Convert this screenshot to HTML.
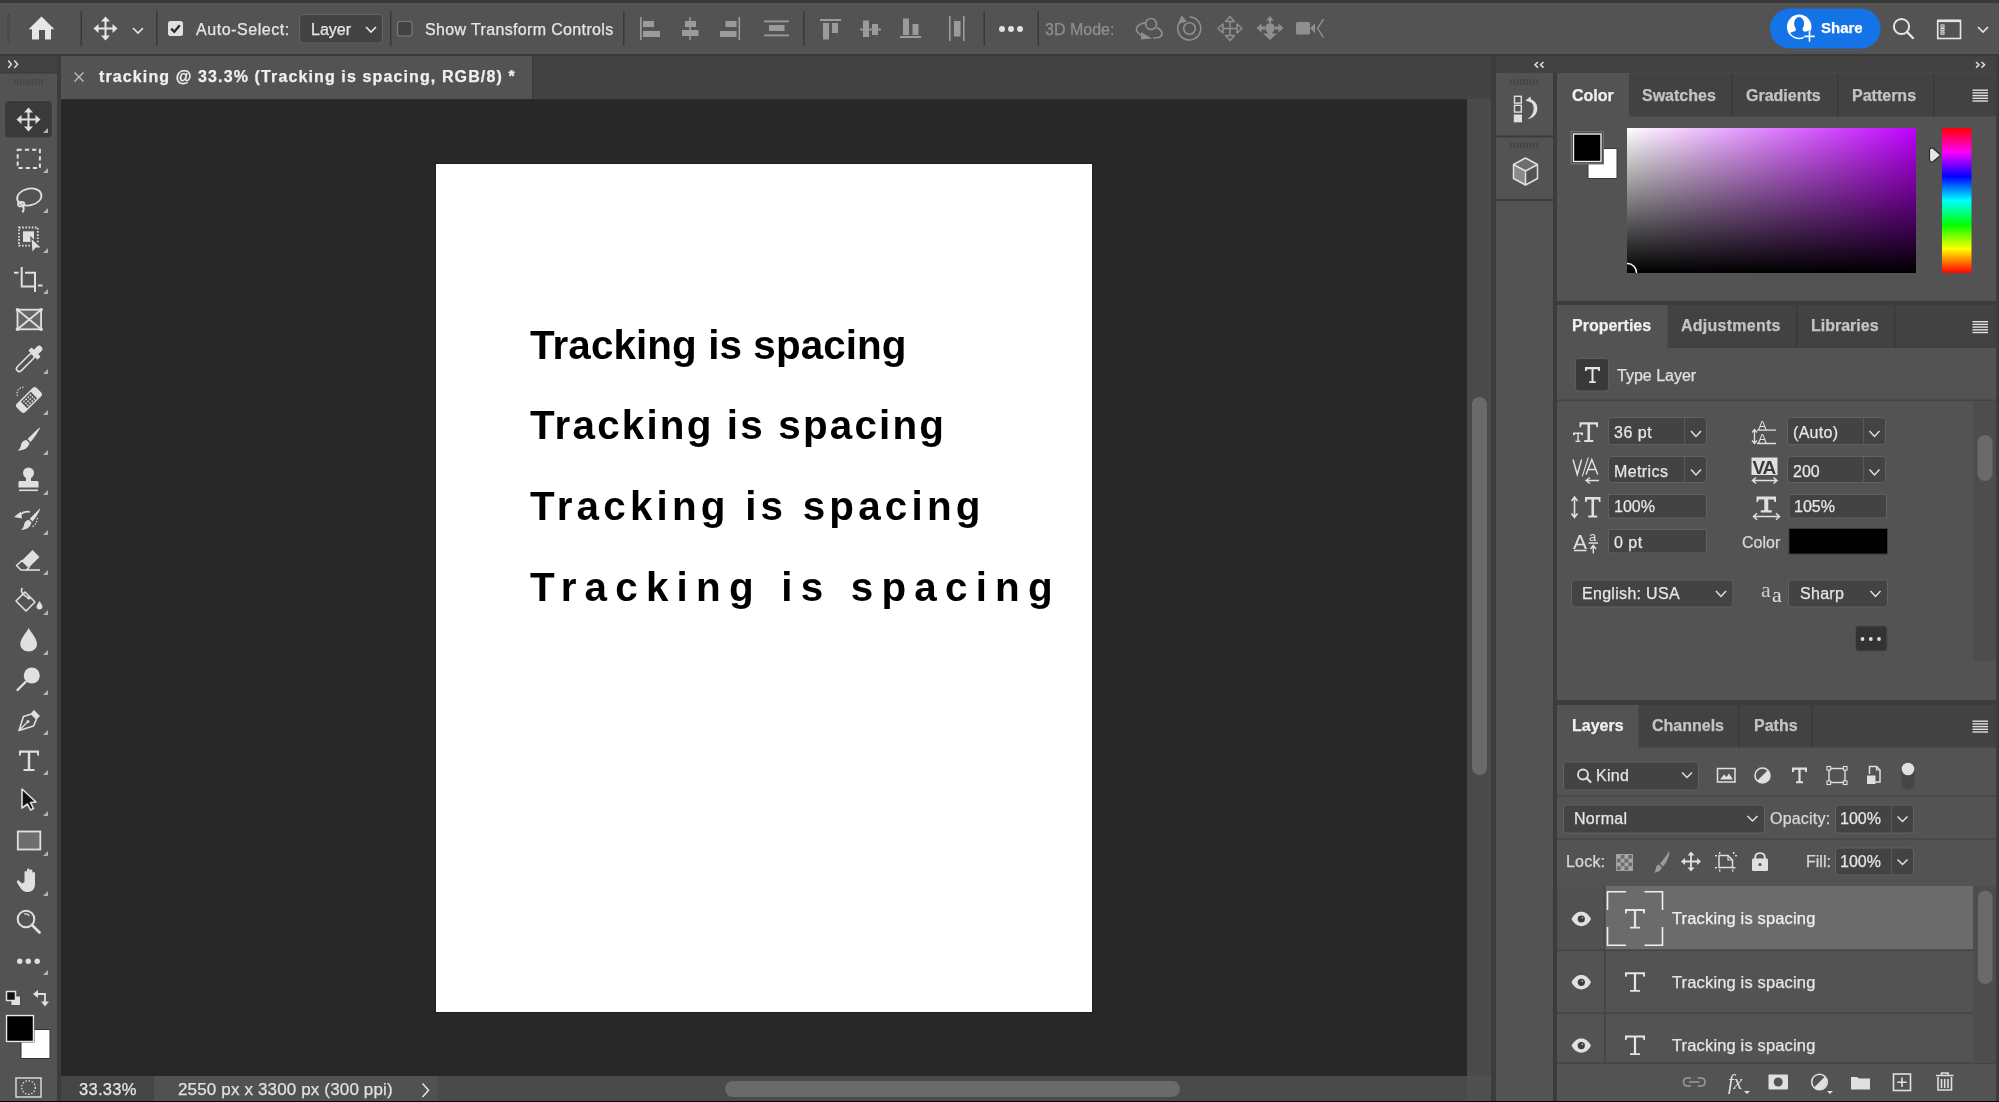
<!DOCTYPE html>
<html><head><meta charset="utf-8">
<style>
*{margin:0;padding:0;box-sizing:border-box}
html,body{width:1999px;height:1102px;overflow:hidden;background:#535353;font-family:"Liberation Sans",sans-serif;color:#e6e6e6}
.a{position:absolute}
.r{position:absolute;white-space:pre;line-height:1;will-change:transform;-webkit-text-stroke:0.25px currentColor}
svg{position:absolute;overflow:visible}
</style></head><body>
<!-- top border -->
<div class="a" style="left:0;top:0;width:1999px;height:2.5px;background:#393939"></div>
<!-- options bar -->
<div class="a" id="opt" style="left:0;top:3px;width:1999px;height:51px;background:#535353"></div>
<div class="a" style="left:0;top:54px;width:1999px;height:2px;background:#3a3a3a"></div>


<!-- OPTIONS BAR CONTENT -->
<svg style="left:0;top:0" width="1999" height="56">
 <g fill="#474747"><rect x="7" y="14" width="3" height="2"/><rect x="7" y="17" width="3" height="2"/><rect x="7" y="20" width="3" height="2"/><rect x="7" y="23" width="3" height="2"/><rect x="7" y="26" width="3" height="2"/><rect x="7" y="29" width="3" height="2"/><rect x="7" y="32" width="3" height="2"/><rect x="7" y="35" width="3" height="2"/><rect x="7" y="38" width="3" height="2"/><rect x="7" y="41" width="3" height="2"/></g>
 <path d="M41.5 16.5 L54.3 29.3 L51 29.3 L51 39.5 L45 39.5 L45 30 L39 30 L39 39.5 L32 39.5 L32 29.3 L28.7 29.3 Z" fill="#e6e6e6"/>
 <g fill="#3a3a3a"><rect x="80.5" y="11" width="1.5" height="35"/><rect x="156" y="11" width="1.5" height="35"/><rect x="390" y="11" width="1.5" height="35"/><rect x="623" y="11" width="1.5" height="35"/><rect x="803" y="11" width="1.5" height="35"/><rect x="983.5" y="11" width="1.5" height="35"/><rect x="1037.5" y="11" width="1.5" height="35"/></g>
 <!-- move icon -->
 <g stroke="#e6e6e6" stroke-width="2" fill="none"><path d="M105.5 20 V37 M97 28.5 H114"/></g>
 <g fill="#e6e6e6"><path d="M105.5 16.5 L110 21.5 H101 Z"/><path d="M105.5 40.5 L110 35.5 H101 Z"/><path d="M93.5 28.5 L98.5 24 V33 Z"/><path d="M117.5 28.5 L112.5 24 V33 Z"/></g>
 <path d="M133 28 L138 33 L143 28" stroke="#e6e6e6" stroke-width="1.6" fill="none"/>
 <!-- checkbox checked -->
 <rect x="168" y="21" width="15" height="15" rx="2.5" fill="#e0e0e0"/>
 <path d="M171.2 28.6 L174.3 31.8 L179.8 25.2" stroke="#2a2a2a" stroke-width="2.4" fill="none"/>
 <!-- layer dropdown -->
 <rect x="299.5" y="14.5" width="83" height="28.5" rx="3.5" fill="#434343" stroke="#626262" stroke-width="1.2"/>
 <path d="M366 27 L371 32 L376 27" stroke="#e6e6e6" stroke-width="1.6" fill="none"/>
 <!-- checkbox unchecked -->
 <rect x="397.5" y="21.5" width="14.5" height="14.5" rx="2.5" fill="#434343" stroke="#7a7a7a" stroke-width="1.2"/>
 <!-- align icons (disabled) -->
 <g fill="#9b9b9b">
  <rect x="640" y="17" width="1.6" height="23"/><rect x="643" y="21" width="11" height="6"/><rect x="643" y="31" width="17" height="6"/>
  <rect x="689.3" y="17" width="1.6" height="23"/><rect x="685" y="21" width="11" height="6"/><rect x="682" y="30" width="16.5" height="6"/>
  <rect x="738.5" y="17" width="1.6" height="23"/><rect x="725.5" y="21" width="11" height="6"/><rect x="720" y="31" width="16.5" height="6"/>
  <rect x="764" y="20.5" width="25" height="1.8"/><rect x="769" y="25" width="15.5" height="6"/><rect x="764" y="34.5" width="25" height="1.8"/>
  <rect x="820" y="19" width="21" height="2"/><rect x="823" y="23" width="6" height="16.5"/><rect x="832" y="23" width="6" height="10"/>
  <rect x="860" y="28.6" width="21" height="1.8"/><rect x="863" y="20.5" width="6" height="16.5"/><rect x="872" y="24" width="6" height="11"/>
  <rect x="900" y="36" width="21" height="2"/><rect x="903" y="18.5" width="6" height="16.5"/><rect x="912.5" y="24" width="6" height="11"/>
  <rect x="949" y="16" width="1.6" height="25"/><rect x="963" y="16" width="1.6" height="25"/><rect x="954" y="21" width="6.5" height="15.5"/>
 </g>
 <g fill="#e0e0e0"><circle cx="1002" cy="29" r="3"/><circle cx="1011" cy="29" r="3"/><circle cx="1020" cy="29" r="3"/></g>
 <!-- 3D icons -->
 <g stroke="#8f8f8f" stroke-width="1.6" fill="none">
  <circle cx="1151" cy="24" r="5.5"/>
  <path d="M1145.5 22.5 C1138 24 1134 28 1138 33 C1140 35 1143 36.5 1146 37"/>
  <path d="M1156.5 27.5 C1162 30 1164 34 1160 37 C1158 38 1155 38 1153 38"/>
  <path d="M1181 20.5 A11.5 11.5 0 1 0 1189.5 17"/>
  <circle cx="1189.5" cy="28.5" r="5.8"/>
 </g>
 <g fill="#8f8f8f">
  <path d="M1141 32 L1152 38.5 L1141 39.5 Z"/>
  <path d="M1178 24 L1181.5 15.5 L1187 21.5 Z"/>
 </g>
 <g fill="none" stroke="#8f8f8f" stroke-width="1.5" stroke-linejoin="round">
  <path d="M1230 21 V36 M1222.5 28.5 H1237.5"/>
  <path d="M1230 16.5 L1234.5 21.5 H1225.5 Z M1230 40.5 L1234.5 35.5 H1225.5 Z M1218 28.5 L1223 24 V33 Z M1242 28.5 L1237 24 V33 Z"/>
 </g>
 <g fill="#8f8f8f">
  <circle cx="1270" cy="28" r="4.8"/>
  <path d="M1270 16 L1274 20.5 H1271 V23 H1269 V20.5 H1266 Z"/>
  <path d="M1270 40 L1277 33.5 H1272.5 V31 H1267.5 V33.5 H1263 Z"/>
  <path d="M1256.5 28 L1261.5 23.5 V26.5 H1265 V29.5 H1261.5 V32.5 Z"/>
  <path d="M1283.5 28 L1278.5 23.5 V26.5 H1275 V29.5 H1278.5 V32.5 Z"/>
  <rect x="1296" y="22" width="14" height="12.5" rx="1.5"/>
  <path d="M1310 28.3 L1315 23.5 V33 Z"/>
 </g>
 <path d="M1323.5 19 L1317.5 28.3 L1323.5 37.5" stroke="#8f8f8f" stroke-width="1.4" fill="none"/>
 <!-- share -->
 <rect x="1770" y="8.5" width="110.5" height="40" rx="20" fill="#1473e6"/>
 <defs><clipPath id="avc"><circle cx="1799.2" cy="26.9" r="10.8"/></clipPath></defs>
 <circle cx="1799.2" cy="26.9" r="12.3" fill="#ffffff"/>
 <g fill="#1473e6" clip-path="url(#avc)">
  <ellipse cx="1799.1" cy="23.6" rx="5" ry="6.6"/>
  <path d="M1796 28 H1802.3 L1803 31 C1808 32 1810 34 1810 36 V42 H1788 V36 C1788 34 1790.5 32 1795.5 31 Z"/>
 </g>
 <circle cx="1809.5" cy="36.4" r="6" fill="#1473e6"/>
 <g stroke="#ffffff" stroke-width="1.6"><path d="M1809.5 31 V41.8 M1804.2 36.4 H1814.8"/></g>
 <!-- search -->
 <circle cx="1901.5" cy="26.5" r="7.6" stroke="#e6e6e6" stroke-width="2" fill="none"/>
 <path d="M1907 32 L1913 38" stroke="#e6e6e6" stroke-width="2.4" stroke-linecap="round"/>
 <!-- workspace -->
 <rect x="1937.7" y="20.5" width="22.8" height="18" stroke="#e6e6e6" stroke-width="1.6" fill="none"/>
 <rect x="1937.7" y="19.7" width="22.8" height="2.4" fill="#e6e6e6"/>
 <g fill="none" stroke="#e6e6e6" stroke-width="1"><rect x="1941" y="25" width="3" height="2.2"/><rect x="1941" y="28.5" width="3" height="2.2"/><rect x="1941" y="32" width="3" height="2.2"/></g>
 <path d="M1978 27 L1983 32 L1988 27" stroke="#e6e6e6" stroke-width="1.6" fill="none"/>
</svg>
<div class="r" style="left:196px;top:21.5px;font-size:16px;letter-spacing:0.55px">Auto-Select:</div>
<div class="r" style="left:311px;top:21.5px;font-size:16px">Layer</div>
<div class="r" style="left:425px;top:21.5px;font-size:16px;letter-spacing:0.35px">Show Transform Controls</div>
<div class="r" style="left:1045px;top:21.5px;font-size:16px;color:#8f8f8f">3D Mode:</div>
<div class="r" style="left:1821px;top:20px;font-size:15px;font-weight:bold;color:#fff">Share</div>

<!-- left toolbar -->
<div class="a" style="left:0;top:56px;width:57px;height:17px;background:#424242"></div>
<div class="a" style="left:0;top:73px;width:57px;height:1029px;background:#535353"></div>
<div class="a" style="left:57px;top:56px;width:4px;height:1046px;background:#3c3c3c"></div>


<!-- TOOLBAR ICONS -->
<svg style="left:0;top:0" width="60" height="1102">
 <rect x="4.5" y="100.5" width="48" height="37.5" rx="4" fill="#3a3a3a" stroke="#585858" stroke-width="1"/>
 <!-- corner triangles -->
 <g fill="#b4b4b4">
  <path d="M48 128 V133 H43 Z"/><path d="M48 168 V173 H43 Z"/><path d="M48 208 V213 H43 Z"/><path d="M48 248 V253 H43 Z"/>
  <path d="M48 289 V294 H43 Z"/><path d="M48 369 V374 H43 Z"/><path d="M48 410 V415 H43 Z"/><path d="M48 450 V455 H43 Z"/>
  <path d="M48 490 V495 H43 Z"/><path d="M48 530 V535 H43 Z"/><path d="M48 570 V575 H43 Z"/><path d="M48 610 V615 H43 Z"/>
  <path d="M48 650 V655 H43 Z"/><path d="M48 690 V695 H43 Z"/><path d="M48 730 V735 H43 Z"/><path d="M48 770 V775 H43 Z"/>
  <path d="M48 811 V816 H43 Z"/><path d="M48 851 V856 H43 Z"/><path d="M48 891 V896 H43 Z"/><path d="M48 970 V975 H43 Z"/>
 </g>
 <!-- move -->
 <g stroke="#e0e0e0" stroke-width="2" fill="none"><path d="M28.5 111 V128 M20 119.5 H37"/></g>
 <g fill="#e0e0e0"><path d="M28.5 107.5 L33 112.5 H24 Z"/><path d="M28.5 131.5 L33 126.5 H24 Z"/><path d="M16.5 119.5 L21.5 115 V124 Z"/><path d="M40.5 119.5 L35.5 115 V124 Z"/></g>
 <!-- marquee -->
 <path d="M17.7 149.7 H39.9 V167.9 H17.7 Z" stroke="#e0e0e0" stroke-width="2" fill="none" stroke-dasharray="4.2 3"/>
 <!-- lasso -->
 <g stroke="#e0e0e0" stroke-width="1.8" fill="none">
  <ellipse cx="29.3" cy="197" rx="12.3" ry="8.4" transform="rotate(-12 29.3 197)"/>
  <ellipse cx="21.2" cy="204.2" rx="3.2" ry="2.2"/>
  <path d="M23 206 C24 208 24 210.5 22.5 212.5"/>
 </g>
 <!-- object select -->
 <rect x="19" y="227.5" width="18.8" height="18.2" stroke="#e0e0e0" stroke-width="1.8" fill="none" stroke-dasharray="1.6 1.6"/>
 <rect x="23" y="231.3" width="11" height="10.6" fill="#e0e0e0"/>
 <path d="M30.9 237.5 L42 248 L36 248 L32 253 Z" fill="#e0e0e0" stroke="#535353" stroke-width="1.2"/>
 <!-- crop -->
 <g stroke="#e0e0e0" stroke-width="2" fill="none">
  <path d="M14 272.7 H18.5 M21.7 267 V286.5 H35 M25 272.7 H35 V292 M38 285.5 H42.5"/>
 </g>
 <!-- frame -->
 <rect x="17.5" y="309.7" width="23.6" height="19.6" fill="#666666"/>
 <g stroke="#e0e0e0" stroke-width="1.8" fill="none"><rect x="17.5" y="309.7" width="23.6" height="19.6"/><path d="M17.5 309.7 L41.1 329.3 M41.1 309.7 L17.5 329.3"/></g>
 <g fill="#e0e0e0"><circle cx="17.5" cy="309.7" r="1.8"/><circle cx="41.1" cy="309.7" r="1.8"/><circle cx="17.5" cy="329.3" r="1.8"/><circle cx="41.1" cy="329.3" r="1.8"/></g>
 <!-- eyedropper -->
 <g transform="rotate(45 29 359)" fill="#e0e0e0">
  <rect x="25.8" y="341.5" width="6.4" height="9" rx="3.2"/>
  <rect x="22.5" y="349" width="13" height="4.6" rx="1"/>
  <rect x="26.2" y="353" width="5.6" height="22.5" rx="2.8" fill="none" stroke="#e0e0e0" stroke-width="1.6"/>
 </g>
 <!-- healing -->
 <g transform="rotate(-45 29 400)">
  <rect x="15" y="394" width="28" height="12" rx="3" fill="#e0e0e0"/>
  <rect x="22" y="395.5" width="14" height="9" fill="#535353"/>
  <g fill="#e0e0e0"><circle cx="24.5" cy="397.5" r="0.9"/><circle cx="27.5" cy="397.5" r="0.9"/><circle cx="30.5" cy="397.5" r="0.9"/><circle cx="33.5" cy="397.5" r="0.9"/><circle cx="24.5" cy="400.3" r="0.9"/><circle cx="27.5" cy="400.3" r="0.9"/><circle cx="30.5" cy="400.3" r="0.9"/><circle cx="33.5" cy="400.3" r="0.9"/><circle cx="24.5" cy="403" r="0.9"/><circle cx="27.5" cy="403" r="0.9"/><circle cx="30.5" cy="403" r="0.9"/><circle cx="33.5" cy="403" r="0.9"/></g>
 </g>
 <path d="M17.5 396 C16 391 19 387 24 387.5" stroke="#e0e0e0" stroke-width="1.3" stroke-dasharray="1.2 1.6" fill="none"/>
 <!-- brush -->
 <path d="M39.5 427.5 L40 428 C37 434 33 439.5 30.5 442 L27.5 439 C30 436.5 35.5 431 39.5 427.5 Z" fill="#e0e0e0"/>
 <path d="M26.5 440 L29.5 443 C28.5 448 24 450.5 17.5 450.5 C20 449 20.5 447.5 21 445 C21.5 442 23.5 440.5 26.5 440 Z" fill="#e0e0e0"/>
 <!-- stamp -->
 <circle cx="28.5" cy="473" r="5.5" fill="#e0e0e0"/>
 <path d="M26 476 H31 V481 H37 C38 481 38.5 481.5 38.5 482.5 V487.5 H18.5 V482.5 C18.5 481.5 19 481 20 481 H26 Z" fill="#e0e0e0"/>
 <rect x="19" y="489.5" width="19" height="1.6" fill="#e0e0e0"/>
 <!-- history brush -->
 <path d="M40 508.5 L40.3 509 C38 514.5 34.5 519.5 32.5 521.5 L29.7 518.8 C32 516.5 36.5 512 40 508.5 Z" fill="#e0e0e0"/>
 <path d="M28.7 519.8 L31.5 522.6 C30.5 527 27 530 21 530 C23 528.5 23.5 527 24 525 C24.5 522 26 520.5 28.7 519.8 Z" fill="#e0e0e0"/>
 <path d="M30 512 C26 511 23 512 20.5 514.5" stroke="#e0e0e0" stroke-width="1.6" fill="none"/>
 <path d="M14 517 L21 511.5 L22 518.5 Z" fill="#e0e0e0"/>
 <path d="M37.5 518 C37 522 35.5 525 32 527" stroke="#e0e0e0" stroke-width="1.3" stroke-dasharray="1.2 1.8" fill="none"/>
 <!-- eraser -->
 <path d="M32.5 550 L39.5 557 L29 567.5 L22 560.5 Z" fill="#e0e0e0"/>
 <path d="M22 560.5 L29 567.5 L26.5 570 H21 L16.5 565.5 Z" stroke="#e0e0e0" stroke-width="1.6" fill="none" stroke-linejoin="round"/>
 <rect x="26" y="569.2" width="14" height="1.6" fill="#e0e0e0"/>
 <!-- bucket -->
 <path d="M16 601 L25 592 L35 602 L26 611 Z" stroke="#e0e0e0" stroke-width="1.6" fill="none" stroke-linejoin="round"/>
 <path d="M22.5 588 C20 590 22 595 28.5 598" stroke="#e0e0e0" stroke-width="1.6" fill="none"/>
 <circle cx="28.8" cy="598" r="1.5" fill="#e0e0e0"/>
 <path d="M39.5 601 C41 603.5 42.5 605 42.5 606.7 C42.5 608.5 41 609.5 39.5 609.5 C38 609.5 36.5 608.5 36.5 606.7 C36.5 605 38 603.5 39.5 601 Z" fill="#e0e0e0"/>
 <!-- blur drop -->
 <path d="M28.7 628 C31 632.5 37 638.5 37 644 C37 648.3 33.5 651.5 28.7 651.5 C24 651.5 20.3 648.3 20.3 644 C20.3 638.5 26.5 632.5 28.7 628 Z" fill="#e0e0e0"/>
 <!-- dodge -->
 <circle cx="31.8" cy="675.5" r="8" fill="#e0e0e0"/>
 <path d="M25.5 682 L17.5 690" stroke="#e0e0e0" stroke-width="2.4" stroke-linecap="round"/>
 <!-- pen -->
 <path d="M34 710 L40 716 L37 719 L31 713 Z" fill="#e0e0e0"/>
 <path d="M31.5 714 L36.5 719 L33.5 726 L19 730.5 L23.5 716.5 Z" stroke="#e0e0e0" stroke-width="1.6" fill="none" stroke-linejoin="round"/>
 <path d="M19.5 730 L27 722.5" stroke="#e0e0e0" stroke-width="1.3"/>
 <circle cx="28" cy="721.5" r="1.5" fill="#e0e0e0"/>
 <!-- type -->
 <path d="M19 750.5 H39 V755.7 H37.6 L36.8 752.7 H30.2 V769 H34.5 V771 H23.5 V769 H27.8 V752.7 H21.2 L20.4 755.7 H19 Z" fill="#e0e0e0"/>
 <!-- path select -->
 <path d="M22 789 L36 802 L30.5 802.5 L33.5 808.5 L30.5 810 L27.5 804 L22 808 Z" fill="#111" stroke="#e0e0e0" stroke-width="1.6" stroke-linejoin="round"/>
 <!-- rectangle -->
 <rect x="17.8" y="831.5" width="22.5" height="18" fill="#6e6e6e" stroke="#e0e0e0" stroke-width="1.8"/>
 <!-- hand -->
 <path d="M24.5 882 V872.5 C24.5 870.5 27 870.5 27 872.5 V880 V870 C27 868 29.7 868 29.7 870 V880 V871 C29.7 869 32.4 869 32.4 871 V880.5 V873.5 C32.4 871.5 35 871.5 35 873.5 V884 C35 889 32 892 27.5 892 C23.5 892 21.5 889.5 19.5 886.5 L17 882.5 C16.3 881 17.7 879.7 19 880.7 L22 883.5 Z" fill="#e0e0e0"/>
 <!-- zoom -->
 <circle cx="26" cy="919" r="8.3" stroke="#e0e0e0" stroke-width="2" fill="none"/>
 <path d="M32 925 L39.5 932.5" stroke="#e0e0e0" stroke-width="2.8" stroke-linecap="round"/>
 <path d="M24 914 C26 913.5 28.5 914.5 29.5 916" stroke="#e0e0e0" stroke-width="1.2" fill="none"/>
 <!-- more -->
 <g fill="#e0e0e0"><circle cx="19.7" cy="961.2" r="2.7"/><circle cx="28.3" cy="961.2" r="2.7"/><circle cx="37.2" cy="961.2" r="2.7"/></g>
 <!-- default colors -->
 <rect x="11" y="996" width="9.5" height="9.5" fill="#e0e0e0" stroke="#3a3a3a" stroke-width="0.8"/>
 <rect x="6.5" y="991.5" width="9" height="9" fill="#111" stroke="#e0e0e0" stroke-width="1.5"/>
 <!-- swap -->
 <path d="M38 994 H45 V1003" stroke="#e0e0e0" stroke-width="1.8" fill="none"/>
 <path d="M33 994 L38 990 V998 Z M45 1006.5 L41 1001.5 H49 Z" fill="#e0e0e0"/>
 <!-- fg/bg -->
 <rect x="21" y="1029.5" width="29" height="29" fill="#fff" stroke="#333" stroke-width="1"/>
 <rect x="5.5" y="1014.5" width="29" height="28" fill="#2a2a2a"/>
 <rect x="6.5" y="1015.5" width="27" height="26" fill="#000" stroke="#e6e6e6" stroke-width="1.5"/>
 <!-- quick mask -->
 <rect x="16" y="1078" width="25" height="19" stroke="#e0e0e0" stroke-width="1.4" fill="none"/>
 <circle cx="28.5" cy="1087.5" r="6.8" stroke="#e0e0e0" stroke-width="1.4" fill="none" stroke-dasharray="1.4 1.8"/>
</svg>

<!-- document tab bar -->
<div class="a" style="left:61px;top:56px;width:1434px;height:43px;background:#434343"></div>
<div class="a" style="left:61px;top:56px;width:471px;height:43px;background:#535353"></div>
<div class="a" style="left:532px;top:56px;width:2px;height:43px;background:#3c3c3c"></div>
<!-- canvas -->
<div class="a" style="left:61px;top:99px;width:1406px;height:977px;background:#282828"></div>
<div class="a" style="left:61px;top:99px;width:1430px;height:1px;background:#2f2f2f"></div>
<div class="a" style="left:435px;top:163px;width:658px;height:850px;background:#1f1f1f"></div>
<div class="a" style="left:436px;top:164px;width:656px;height:848px;background:#ffffff"></div>

<!-- canvas text -->
<div class="r" id="l1" style="-webkit-text-stroke:0;left:529.6px;top:325px;font-size:40.4px;font-weight:bold;color:#000;letter-spacing:0.09px">Tracking is spacing</div>
<div class="r" id="l2" style="-webkit-text-stroke:0;left:529.6px;top:405px;font-size:40.4px;font-weight:bold;color:#000;letter-spacing:2.17px">Tracking is spacing</div>
<div class="r" id="l3" style="-webkit-text-stroke:0;left:529.6px;top:486px;font-size:40.4px;font-weight:bold;color:#000;letter-spacing:4.2px">Tracking is spacing</div>
<div class="r" id="l4" style="-webkit-text-stroke:0;left:529.6px;top:567px;font-size:40.4px;font-weight:bold;color:#000;letter-spacing:8.21px">Tracking is spacing</div>

<!-- v scroll -->
<div class="a" style="left:1467px;top:99px;width:24px;height:977px;background:#4a4a4a"></div>
<div class="a" style="left:1472px;top:397px;width:15px;height:378px;border-radius:8px;background:#6a6a6a"></div>
<!-- status bar -->
<div class="a" style="left:61px;top:1076px;width:1406px;height:25px;background:#4a4a4a"></div>
<div class="a" style="left:61px;top:1076px;width:93px;height:25px;background:#454545"></div>
<div class="a" style="left:154px;top:1076px;width:283px;height:25px;background:#515151"></div>
<div class="a" style="left:725px;top:1081px;width:455px;height:16px;border-radius:8px;background:#6a6a6a"></div>
<div class="a" style="left:1467px;top:1076px;width:24px;height:25px;background:#4f4f4f"></div>
<div class="a" style="left:0;top:1101px;width:1999px;height:1px;background:#000"></div>
<!-- right border of canvas -->
<div class="a" style="left:1491px;top:56px;width:5px;height:1045px;background:#3c3c3c"></div>


<!-- doc tab -->
<svg style="left:0;top:0" width="600" height="100">
 <path d="M74.5 72.5 L83.5 81.5 M83.5 72.5 L74.5 81.5" stroke="#bdbdbd" stroke-width="1.4"/>
 <path d="M8.3 60.5 L11.3 64.3 L8.3 68 M14.3 60.5 L17.6 64.3 L14.3 68" stroke="#d6d6d6" stroke-width="1.6" fill="none"/>
 <rect x="0" y="72.5" width="57" height="1" fill="#393939"/>
 <g fill="#474747"><rect x="14" y="79" width="1.5" height="6"/><rect x="17" y="79" width="1.5" height="6"/><rect x="20" y="79" width="1.5" height="6"/><rect x="23" y="79" width="1.5" height="6"/><rect x="26" y="79" width="1.5" height="6"/><rect x="29" y="79" width="1.5" height="6"/><rect x="32" y="79" width="1.5" height="6"/><rect x="35" y="79" width="1.5" height="6"/><rect x="38" y="79" width="1.5" height="6"/><rect x="41" y="79" width="1.5" height="6"/></g>
</svg>
<div class="r" style="left:99px;top:69px;font-size:16px;font-weight:bold;letter-spacing:1.12px;color:#f0f0f0">tracking @ 33.3% (Tracking is spacing, RGB/8) *</div>

<!-- collapsed icon column -->
<div class="a" style="left:1496px;top:56px;width:503px;height:17px;background:#424242"></div>
<div class="a" style="left:1496px;top:73px;width:57px;height:1028px;background:#535353"></div>
<div class="a" style="left:1553px;top:73px;width:4px;height:1028px;background:#3c3c3c"></div>
<div class="a" style="left:1996px;top:56px;width:3px;height:1045px;background:#3c3c3c"></div>

<!-- panels -->
<div class="a" style="left:1557px;top:73px;width:439px;height:228px;background:#535353"></div>
<div class="a" style="left:1557px;top:301px;width:439px;height:4px;background:#3c3c3c"></div>
<div class="a" style="left:1557px;top:305px;width:439px;height:395px;background:#535353"></div>
<div class="a" style="left:1557px;top:700px;width:439px;height:5px;background:#3c3c3c"></div>
<div class="a" style="left:1557px;top:705px;width:439px;height:396px;background:#535353"></div>


<!-- RIGHT PANELS CONTENT -->
<svg style="left:0;top:0" width="1999" height="1102">
 <!-- header chevrons -->
 <path d="M1538 62 L1535 64.8 L1538 67.6 M1543.5 62 L1540.5 64.8 L1543.5 67.6" stroke="#e0e0e0" stroke-width="1.5" fill="none"/>
 <path d="M1976 62 L1979 64.8 L1976 67.6 M1981.5 62 L1984.5 64.8 L1981.5 67.6" stroke="#e0e0e0" stroke-width="1.5" fill="none"/>
 <!-- icon column groups -->
 <rect x="1496" y="135.5" width="57" height="2" fill="#3c3c3c"/>
 <rect x="1496" y="199" width="57" height="2" fill="#3c3c3c"/>
 <g fill="#444444">
  <rect x="1510" y="79" width="1.5" height="6"/><rect x="1513.3" y="79" width="1.5" height="6"/><rect x="1516.6" y="79" width="1.5" height="6"/><rect x="1519.9" y="79" width="1.5" height="6"/><rect x="1523.2" y="79" width="1.5" height="6"/><rect x="1526.5" y="79" width="1.5" height="6"/><rect x="1529.8" y="79" width="1.5" height="6"/><rect x="1533.1" y="79" width="1.5" height="6"/><rect x="1536.4" y="79" width="1.5" height="6"/>
  <rect x="1510" y="142.3" width="1.5" height="6"/><rect x="1513.3" y="142.3" width="1.5" height="6"/><rect x="1516.6" y="142.3" width="1.5" height="6"/><rect x="1519.9" y="142.3" width="1.5" height="6"/><rect x="1523.2" y="142.3" width="1.5" height="6"/><rect x="1526.5" y="142.3" width="1.5" height="6"/><rect x="1529.8" y="142.3" width="1.5" height="6"/><rect x="1533.1" y="142.3" width="1.5" height="6"/><rect x="1536.4" y="142.3" width="1.5" height="6"/>
 </g>
 <!-- history icon -->
 <rect x="1514.5" y="96.3" width="6.8" height="6.8" stroke="#e0e0e0" stroke-width="1.4" fill="none"/>
 <rect x="1514.5" y="105.3" width="6.8" height="6.8" stroke="#e0e0e0" stroke-width="1.4" fill="none"/>
 <rect x="1513.8" y="114.5" width="8.2" height="7.8" fill="#e0e0e0"/>
 <path d="M1525.5 100.5 L1530.5 96.5 L1531.5 102.5 Z" fill="#e0e0e0"/>
 <path d="M1529 99 C1535 100 1537.8 104.5 1537.3 109.5 C1536.8 114.5 1533 118 1527.5 119.3 C1531.5 116.5 1533.5 113 1533.7 109 C1533.9 105 1532 102.5 1529.8 101.5 Z" fill="#e0e0e0"/>
 <!-- cube icon -->
 <path d="M1525.5 158 L1537.5 164.5 L1525.5 171 L1513.5 164.5 Z" fill="#6e6e6e"/>
 <path d="M1513.5 164.5 L1525.5 171 V185 L1513.5 178.5 Z" fill="#8a8a8a"/>
 <path d="M1525.5 158 L1537.5 164.5 V178.5 L1525.5 185 L1513.5 178.5 V164.5 Z M1513.5 164.5 L1525.5 171 L1537.5 164.5 M1525.5 171 V185" stroke="#e0e0e0" stroke-width="1.5" fill="none" stroke-linejoin="round"/>

 <!-- ===== COLOR PANEL ===== -->
 <rect x="1629" y="73.5" width="367" height="43" fill="#424242"/>
 <g fill="#383838"><rect x="1731" y="73.5" width="1.2" height="43"/><rect x="1837" y="73.5" width="1.2" height="43"/><rect x="1933" y="73.5" width="1.2" height="43"/></g>
 <g fill="#e0e0e0"><rect x="1972.5" y="89.5" width="15.5" height="1.4"/><rect x="1972.5" y="92.2" width="15.5" height="1.4"/><rect x="1972.5" y="94.9" width="15.5" height="1.4"/><rect x="1972.5" y="97.6" width="15.5" height="1.4"/><rect x="1972.5" y="100.3" width="15.5" height="1.4"/></g>
 <!-- fg/bg swatches -->
 <rect x="1588" y="148.5" width="29" height="30" fill="#fff" stroke="#3a3a3a" stroke-width="1"/>
 <rect x="1570.5" y="131" width="33.5" height="33.5" fill="#6f6f6f"/>
 <rect x="1572" y="132.5" width="30.5" height="30.5" fill="#2c2c2c"/>
 <rect x="1573.5" y="134" width="27.5" height="27.5" fill="#000" stroke="#f0f0f0" stroke-width="1.4"/>
 <!-- gradient field -->
 <defs>
  <linearGradient id="gh" x1="0" y1="0" x2="1" y2="0"><stop offset="0" stop-color="#fff"/><stop offset="1" stop-color="#c000ff"/></linearGradient>
  <linearGradient id="gv" x1="0" y1="0" x2="0" y2="1"><stop offset="0" stop-color="#000" stop-opacity="0"/><stop offset="1" stop-color="#000" stop-opacity="1"/></linearGradient>
  <linearGradient id="hue" x1="0" y1="0" x2="0" y2="1">
   <stop offset="0" stop-color="#ff0000"/><stop offset="0.1667" stop-color="#ff00ff"/><stop offset="0.3333" stop-color="#0000ff"/><stop offset="0.5" stop-color="#00ffff"/><stop offset="0.6667" stop-color="#00ff00"/><stop offset="0.8333" stop-color="#ffff00"/><stop offset="1" stop-color="#ff0000"/>
  </linearGradient>
  <clipPath id="gclip"><rect x="1627" y="128" width="289" height="145"/></clipPath>
 </defs>
 <rect x="1627" y="128" width="289" height="145" fill="url(#gh)"/>
 <rect x="1627" y="128" width="289" height="145" fill="url(#gv)"/>
 <circle cx="1627.5" cy="272.5" r="9" stroke="#fff" stroke-width="1.4" fill="none" clip-path="url(#gclip)"/>
 <rect x="1942" y="128" width="29.5" height="145" fill="url(#hue)"/>
 <path d="M1929.5 150.5 C1929.5 148.3 1931.5 147.3 1933.2 148.5 L1939.5 154 C1940.3 154.7 1940.3 155.6 1939.5 156.3 L1933.2 161.5 C1931.5 162.7 1929.5 161.7 1929.5 159.5 Z" fill="#e6e6e6" stroke="#2a2a2a" stroke-width="1.2"/>

 <!-- ===== PROPERTIES PANEL ===== -->
 <rect x="1667.5" y="305" width="328.5" height="43" fill="#424242"/>
 <g fill="#383838"><rect x="1796" y="305" width="1.2" height="43"/><rect x="1894" y="305" width="1.2" height="43"/></g>
 <g fill="#e0e0e0"><rect x="1972.5" y="321" width="15.5" height="1.4"/><rect x="1972.5" y="323.7" width="15.5" height="1.4"/><rect x="1972.5" y="326.4" width="15.5" height="1.4"/><rect x="1972.5" y="329.1" width="15.5" height="1.4"/><rect x="1972.5" y="331.8" width="15.5" height="1.4"/></g>
 <rect x="1575.5" y="358.5" width="33" height="32.5" rx="3" fill="#393939" stroke="#5d5d5d" stroke-width="1"/>
 <path d="M1585 367 H1600 V371 H1598.5 L1597.8 369.2 H1593.5 V381.3 H1595.8 V383 H1589.2 V381.3 H1591.5 V369.2 H1587.2 L1586.5 371 H1585 Z" fill="#e6e6e6"/>
 <rect x="1557" y="399.5" width="439" height="1.8" fill="#444444"/>
 <!-- scroll track -->
 <rect x="1973" y="402" width="23" height="259" fill="#4d4d4d"/>
 <rect x="1977.5" y="435" width="15" height="46" rx="7.5" fill="#6a6a6a"/>
 <!-- fields -->
 <g fill="#434343" stroke="#616161" stroke-width="1">
  <rect x="1608.5" y="417.5" width="98" height="27" rx="3"/>
  <rect x="1608.5" y="456.5" width="98" height="26" rx="3"/>
  <rect x="1608.5" y="494.5" width="98" height="23.5"/>
  <rect x="1608.5" y="529.5" width="98" height="23.5"/>
  <rect x="1787.5" y="417.5" width="98" height="27" rx="3"/>
  <rect x="1787.5" y="456.5" width="98" height="26" rx="3"/>
  <rect x="1789" y="494.5" width="97.5" height="23.5"/>
 </g>
 <g fill="#585858"><rect x="1684" y="418" width="1.2" height="26"/><rect x="1684" y="457" width="1.2" height="25"/><rect x="1863" y="418" width="1.2" height="26"/><rect x="1863" y="457" width="1.2" height="25"/></g>
 <g stroke="#e0e0e0" stroke-width="1.5" fill="none">
  <path d="M1691 431 L1696 436.5 L1701 431"/><path d="M1691 469.5 L1696 475 L1701 469.5"/>
  <path d="M1869.5 431 L1874.5 436.5 L1879.5 431"/><path d="M1869.5 469.5 L1874.5 475 L1879.5 469.5"/>
 </g>
 <rect x="1789" y="528.5" width="98.5" height="25.5" fill="#000" stroke="#3a3a3a" stroke-width="1"/>
 <!-- language & AA -->
 <g fill="#434343" stroke="#616161" stroke-width="1">
  <rect x="1571.5" y="580" width="161.5" height="27" rx="3"/>
  <rect x="1788.5" y="580" width="99" height="27" rx="3"/>
 </g>
 <g stroke="#e0e0e0" stroke-width="1.5" fill="none"><path d="M1716 591 L1721 596.5 L1726 591"/><path d="M1870.5 591 L1875.5 596.5 L1880.5 591"/></g>
 <rect x="1855.5" y="626" width="31.5" height="25" rx="3" fill="#333333" stroke="#4a4a4a" stroke-width="1"/>
 <g fill="#e0e0e0"><circle cx="1862.5" cy="639" r="1.9"/><circle cx="1870.8" cy="639" r="1.9"/><circle cx="1879" cy="639" r="1.9"/></g>
 <!-- char icons left -->
 <path d="M1579.5 422.2 H1598 V427.2 H1596.6 L1595.8 424.59999999999997 H1590.05 V440 H1593.25 V442 H1584.25 V440 H1587.45 V424.59999999999997 H1581.7 L1580.9 427.2 H1579.5 Z" fill="#e0e0e0"/>
 <path d="M1573 432.5 H1583 V435.2 H1581.6 L1580.8 433.9 H1578.75 V440.8 H1580.5 V442 H1575.5 V440.8 H1577.25 V433.9 H1575.2 L1574.4 435.2 H1573 Z" fill="#e0e0e0"/>
 <path d="M1585 497 H1600.5 V502.0 H1599.1 L1598.3 499.4 H1594.05 V515.5 H1597.25 V517.5 H1588.25 V515.5 H1591.45 V499.4 H1587.2 L1586.4 502.0 H1585 Z" fill="#e0e0e0"/>
 <path d="M1573 459.5 L1577.3 474.5 L1581.6 459.5" stroke="#e0e0e0" stroke-width="1.5" fill="none"/>
 <path d="M1588.3 457.5 L1582.3 476.3" stroke="#e0e0e0" stroke-width="1.1"/>
 <path d="M1586 474.5 L1591.8 459.5 L1597.8 474.5 M1588 469.5 H1595.6" stroke="#e0e0e0" stroke-width="1.5" fill="none"/>
 <g fill="#e0e0e0" font-family="Liberation Sans">
  <text x="1573" y="548.5" font-size="21">A</text>
  <text x="1589" y="541" font-size="13">a</text>
 </g>
 <path d="M1599 480.5 H1586.5 M1590 477.5 L1586 480.5 L1590 483.5" stroke="#e0e0e0" stroke-width="1.4" fill="none"/>
 <path d="M1574.5 497.5 V517 M1571.5 501 L1574.5 497 L1577.5 501 M1571.5 513.5 L1574.5 517.5 L1577.5 513.5" stroke="#e0e0e0" stroke-width="1.6" fill="none"/>
 <path d="M1574 550.5 H1586.5 M1588.5 543 H1598" stroke="#e0e0e0" stroke-width="1.3"/>
 <path d="M1593.3 553.5 V546 M1590.5 549 L1593.3 545.5 L1596 549" stroke="#e0e0e0" stroke-width="1.4" fill="none"/>
 <!-- char icons right -->
 <g fill="#e0e0e0" font-family="Liberation Sans">
  <text x="1758" y="429.5" font-size="13">A</text>
  <text x="1758" y="443" font-size="13">A</text>
 </g>
 <path d="M1757 430.2 H1776 M1757 443.5 H1776" stroke="#e0e0e0" stroke-width="1.3"/>
 <path d="M1754.5 430 V443 M1752 432.5 L1754.5 429.5 L1757 432.5 M1752 440.5 L1754.5 443.5 L1757 440.5" stroke="#e0e0e0" stroke-width="1.3" fill="none"/>
 <rect x="1751.5" y="457.5" width="26" height="17.5" fill="#e0e0e0"/>
 <text x="1752.5" y="473.5" font-size="19" font-family="Liberation Sans" font-weight="bold" fill="#3a3a3a" letter-spacing="-1.2">VA</text>
 <path d="M1753 480.5 H1776.5 M1756 477.5 L1752.5 480.5 L1756 483.5 M1773.5 477.5 L1777 480.5 L1773.5 483.5" stroke="#e0e0e0" stroke-width="1.5" fill="none"/>
 <path d="M1756.5 496.5 H1776 V502.0 H1774.6 L1773.8 499.5 H1768.25 V510.3 H1771.75 V512.5 H1760.75 V510.3 H1764.25 V499.5 H1758.7 L1757.9 502.0 H1756.5 Z" fill="#e0e0e0"/>
 <path d="M1754 516.5 H1779 M1757 513.3 L1753.5 516.5 L1757 519.7 M1776 513.3 L1779.5 516.5 L1776 519.7" stroke="#e0e0e0" stroke-width="1.5" fill="none"/>
 <!-- aa icon -->
 <text x="1761" y="597" font-size="22" font-family="Liberation Serif" fill="#cfcfcf">a</text>
 <text x="1772" y="601.8" font-size="22" font-family="Liberation Serif" fill="#e0e0e0">a</text>

 <!-- ===== LAYERS PANEL ===== -->
 <rect x="1638.5" y="705" width="357.5" height="42.5" fill="#424242"/>
 <g fill="#383838"><rect x="1738" y="705" width="1.2" height="42.5"/><rect x="1811" y="705" width="1.2" height="42.5"/></g>
 <g fill="#e0e0e0"><rect x="1972.5" y="720.5" width="15.5" height="1.4"/><rect x="1972.5" y="723.2" width="15.5" height="1.4"/><rect x="1972.5" y="725.9" width="15.5" height="1.4"/><rect x="1972.5" y="728.6" width="15.5" height="1.4"/><rect x="1972.5" y="731.3" width="15.5" height="1.4"/></g>
 <rect x="1563.5" y="762" width="135" height="28" rx="3" fill="#434343" stroke="#616161" stroke-width="1"/>
 <circle cx="1583" cy="774.5" r="5" stroke="#e0e0e0" stroke-width="1.8" fill="none"/>
 <path d="M1586.5 778 L1590.5 782" stroke="#e0e0e0" stroke-width="2.2" stroke-linecap="round"/>
 <path d="M1682 772.5 L1687 777.5 L1692 772.5" stroke="#e0e0e0" stroke-width="1.5" fill="none"/>
 <!-- filter icons -->
 <rect x="1717.5" y="768.5" width="17.5" height="13.5" stroke="#e0e0e0" stroke-width="1.5" fill="none"/>
 <path d="M1720 779.5 L1724 774.5 L1726.5 777 L1729 773.5 L1733 779.5 Z" fill="#e0e0e0"/>
 <circle cx="1762.5" cy="775.5" r="7.5" stroke="#e0e0e0" stroke-width="1.6" fill="none"/>
 <path d="M1767.8 770.2 A7.5 7.5 0 0 1 1757.2 780.8 Z" fill="#e0e0e0"/>
 <path d="M1792 767.5 H1807 V772 H1805.3 L1804.6 769.8 H1800.6 V781.2 H1803 V783.2 H1796 V781.2 H1798.4 V769.8 H1794.4 L1793.7 772 H1792 Z" fill="#e0e0e0"/>
 <rect x="1829" y="768.5" width="16" height="14" stroke="#e0e0e0" stroke-width="1.4" fill="none"/>
 <g fill="#535353" stroke="#e0e0e0" stroke-width="1.1"><rect x="1827" y="766.5" width="3.6" height="3.6"/><rect x="1843.4" y="766.5" width="3.6" height="3.6"/><rect x="1827" y="780.9" width="3.6" height="3.6"/><rect x="1843.4" y="780.9" width="3.6" height="3.6"/></g>
 <path d="M1869.5 774 V766.5 H1876.5 L1880 770 V782 H1875" stroke="#e0e0e0" stroke-width="1.5" fill="none"/>
 <path d="M1876.5 766.5 V770 H1880" stroke="#e0e0e0" stroke-width="1.2" fill="none"/>
 <rect x="1867" y="775.5" width="8.5" height="8.5" fill="#e0e0e0"/>
 <rect x="1901.5" y="763" width="13" height="26.5" rx="6.5" fill="#454545" stroke="#4a4a4a" stroke-width="1"/>
 <circle cx="1908" cy="769" r="6.3" fill="#e0e0e0"/>
 <rect x="1557" y="795.5" width="439" height="1.5" fill="#464646"/>
 <!-- normal / opacity -->
 <rect x="1563.5" y="805" width="201" height="28" rx="3" fill="#434343" stroke="#616161" stroke-width="1"/>
 <path d="M1747.5 816 L1752.5 821 L1757.5 816" stroke="#e0e0e0" stroke-width="1.5" fill="none"/>
 <rect x="1835.5" y="805" width="78" height="28" rx="3" fill="#434343" stroke="#616161" stroke-width="1"/>
 <rect x="1891" y="805.5" width="1.2" height="27" fill="#585858"/>
 <path d="M1897.5 816.5 L1902.5 821.5 L1907.5 816.5" stroke="#e0e0e0" stroke-width="1.5" fill="none"/>
 <rect x="1557" y="838.3" width="439" height="1.5" fill="#464646"/>
 <!-- lock row -->
 <rect x="1616.5" y="854.5" width="16" height="16" fill="#6c6c6c" stroke="#a0a0a0" stroke-width="1"/>
 <g fill="#a8a8a8"><rect x="1617.00" y="855.00" width="3.75" height="3.75"/><rect x="1617.00" y="862.50" width="3.75" height="3.75"/><rect x="1620.75" y="858.75" width="3.75" height="3.75"/><rect x="1620.75" y="866.25" width="3.75" height="3.75"/><rect x="1624.50" y="855.00" width="3.75" height="3.75"/><rect x="1624.50" y="862.50" width="3.75" height="3.75"/><rect x="1628.25" y="858.75" width="3.75" height="3.75"/><rect x="1628.25" y="866.25" width="3.75" height="3.75"/></g>
 <path d="M1668.8 851.5 C1666 856 1662.5 861 1660 863.5 L1663 866.5 C1665.5 864 1669 858.5 1669.5 852 Z" fill="#9a9a9a"/>
 <path d="M1659 864.5 L1662 867.5 C1661 870.5 1658 872.5 1654 872.5 C1655.5 871 1655.8 869 1656 867.5 C1656.3 865.8 1657.5 864.8 1659 864.5 Z" fill="#9a9a9a"/>
 <g stroke="#e0e0e0" stroke-width="1.8" fill="none"><path d="M1691 854 V869 M1683.5 861.5 H1698.5"/></g>
 <g fill="#e0e0e0"><path d="M1691 851.5 L1694.5 855.5 H1687.5 Z M1691 871.5 L1694.5 867.5 H1687.5 Z M1681 861.5 L1685 858 V865 Z M1701 861.5 L1697 858 V865 Z"/></g>
 <path d="M1719 855.5 H1728 L1732.5 860 V867.5 H1719 Z" stroke="#e0e0e0" stroke-width="1.5" fill="none"/>
 <path d="M1728 855.5 V860 H1732.5" stroke="#e0e0e0" stroke-width="1.2" fill="none"/>
 <g fill="#e0e0e0"><rect x="1715" y="855" width="2" height="1.4"/><rect x="1719" y="852" width="1.4" height="2"/><rect x="1733" y="867" width="2.5" height="1.4"/><rect x="1733" y="852" width="1.4" height="2"/><rect x="1735" y="855" width="2" height="1.4"/><rect x="1715" y="867" width="2" height="1.4"/><rect x="1719" y="869.5" width="1.4" height="2"/><rect x="1732" y="869.5" width="1.4" height="2"/></g>
 <rect x="1752" y="858.5" width="16" height="12.5" rx="1.2" fill="#e0e0e0"/>
 <path d="M1755.3 859 V857 C1755.3 851.8 1764.7 851.8 1764.7 857 V859" stroke="#e0e0e0" stroke-width="1.9" fill="none"/>
 <circle cx="1760" cy="864.5" r="1.6" fill="#535353"/>
 <rect x="1835.5" y="848" width="78" height="27" rx="3" fill="#434343" stroke="#616161" stroke-width="1"/>
 <rect x="1891" y="848.5" width="1.2" height="26" fill="#585858"/>
 <path d="M1897.5 859.5 L1902.5 864.5 L1907.5 859.5" stroke="#e0e0e0" stroke-width="1.5" fill="none"/>
 <!-- layer rows -->
 <rect x="1557" y="886" width="416" height="177" fill="#535353"/>
 <rect x="1557" y="886" width="47" height="63.5" fill="#515151"/>
 <rect x="1605" y="886" width="368" height="63.5" fill="#6b6b6b"/>
 <g fill="#444444"><rect x="1557" y="949.5" width="416" height="1.5"/><rect x="1557" y="1012.5" width="416" height="1.5"/><rect x="1604" y="886" width="1.5" height="177"/></g>
 <rect x="1557" y="1062.5" width="439" height="1.5" fill="#444444"/>
 <rect x="1973" y="886" width="23" height="177" fill="#4d4d4d"/>
 <rect x="1978" y="890.5" width="14.5" height="93.5" rx="7.2" fill="#6a6a6a"/>
 <!-- eyes -->
 <g fill="#e0e0e0">
  <path d="M1571.5 919 C1574.5 913.5 1578 911.8 1581.3 911.8 C1584.6 911.8 1588 913.5 1591 919 C1588 924.5 1584.6 926.2 1581.3 926.2 C1578 926.2 1574.5 924.5 1571.5 919 Z"/>
  <path d="M1571.5 982.3 C1574.5 976.8 1578 975.1 1581.3 975.1 C1584.6 975.1 1588 976.8 1591 982.3 C1588 987.8 1584.6 989.5 1581.3 989.5 C1578 989.5 1574.5 987.8 1571.5 982.3 Z"/>
  <path d="M1571.5 1045.6 C1574.5 1040.1 1578 1038.4 1581.3 1038.4 C1584.6 1038.4 1588 1040.1 1591 1045.6 C1588 1051.1 1584.6 1052.8 1581.3 1052.8 C1578 1052.8 1574.5 1051.1 1571.5 1045.6 Z"/>
 </g>
 <g fill="#3d3d3d"><circle cx="1581.3" cy="919" r="3.6"/><circle cx="1581.3" cy="982.3" r="3.6"/><circle cx="1581.3" cy="1045.6" r="3.6"/></g>
 <g fill="#cfcfcf"><circle cx="1582.3" cy="917.8" r="0.8"/><circle cx="1582.3" cy="981.1" r="0.8"/><circle cx="1582.3" cy="1044.4" r="0.8"/></g>
 <!-- T thumbnails -->
 <path d="M1625 909 H1645 V913.4 H1643.6 L1642.8 911 H1636.1 V926.7 H1640.0 V928.5 H1630.0 V926.7 H1633.9 V911 H1627.2 L1626.4 913.4 H1625 Z" fill="#e6e6e6"/>
 <path d="M1625 972.3 H1645 V976.6999999999999 H1643.6 L1642.8 974.3 H1636.1 V990.0 H1640.0 V991.8 H1630.0 V990.0 H1633.9 V974.3 H1627.2 L1626.4 976.6999999999999 H1625 Z" fill="#e6e6e6"/>
 <path d="M1625 1035.6 H1645 V1040.0 H1643.6 L1642.8 1037.6 H1636.1 V1053.3 H1640.0 V1055.1 H1630.0 V1053.3 H1633.9 V1037.6 H1627.2 L1626.4 1040.0 H1625 Z" fill="#e6e6e6"/>
 <g stroke="#f0f0f0" stroke-width="1.6" fill="none">
  <path d="M1607.5 910 V891.8 H1626"/><path d="M1644.5 891.8 H1662.5 V910"/>
  <path d="M1607.5 927 V945.3 H1626"/><path d="M1644.5 945.3 H1662.5 V927"/>
 </g>
 <!-- bottom icons -->
 <g stroke="#9a9a9a" stroke-width="1.6" fill="none">
  <path d="M1691 1078 H1687.5 C1685 1078 1683.5 1079.8 1683.5 1082 C1683.5 1084.2 1685 1086 1687.5 1086 H1691 M1697.5 1078 H1701 C1703.5 1078 1705 1079.8 1705 1082 C1705 1084.2 1703.5 1086 1701 1086 H1697.5 M1689 1082 H1699.5"/>
 </g>
 <text x="1728" y="1088.5" font-size="20" font-family="Liberation Serif" font-style="italic" fill="#e0e0e0">fx</text>
 <path d="M1744 1091 H1750 L1747 1094 Z" fill="#e0e0e0"/>
 <rect x="1768.5" y="1074.5" width="19.5" height="15" rx="1" fill="#e0e0e0"/>
 <circle cx="1778.2" cy="1082" r="4.5" fill="#535353"/>
 <circle cx="1819.5" cy="1082" r="7.8" stroke="#e0e0e0" stroke-width="1.6" fill="none"/>
 <path d="M1825 1076.5 A7.8 7.8 0 0 1 1814 1087.5 Z" fill="#e0e0e0"/>
 <path d="M1827 1091 H1833 L1830 1094 Z" fill="#e0e0e0"/>
 <path d="M1851 1077 H1857.5 L1859 1078.5 H1870 V1089.5 H1851 Z" fill="#e0e0e0"/>
 <path d="M1851 1076.5 H1857 L1858.5 1078" stroke="#535353" stroke-width="0.8" fill="none"/>
 <rect x="1893.5" y="1074" width="17" height="16.5" stroke="#e0e0e0" stroke-width="1.6" fill="none"/>
 <path d="M1902 1077.5 V1087 M1897.3 1082.2 H1906.7" stroke="#e0e0e0" stroke-width="1.6"/>
 <path d="M1936 1075.5 H1953.5 M1941.5 1075.5 V1073 H1948 V1075.5 M1938 1077 V1090 H1951.5 V1077 M1941.5 1079 V1088 M1944.7 1079 V1088 M1948 1079 V1088" stroke="#e0e0e0" stroke-width="1.6" fill="none"/>
</svg>
<!-- panel texts -->
<div class="r" style="left:1571.5px;top:87.5px;font-size:16px;font-weight:bold;color:#f0f0f0">Color</div>
<div class="r" style="left:1642px;top:87.5px;font-size:16px;font-weight:bold;color:#c4c4c4">Swatches</div>
<div class="r" style="left:1745.5px;top:87.5px;font-size:16px;font-weight:bold;color:#c4c4c4">Gradients</div>
<div class="r" style="left:1852px;top:87.5px;font-size:16px;font-weight:bold;color:#c4c4c4">Patterns</div>
<div class="r" style="left:1571.5px;top:318px;font-size:16px;font-weight:bold;color:#f0f0f0">Properties</div>
<div class="r" style="left:1681px;top:318px;font-size:16px;font-weight:bold;color:#c4c4c4;letter-spacing:0.25px">Adjustments</div>
<div class="r" style="left:1810.5px;top:318px;font-size:16px;font-weight:bold;color:#c4c4c4">Libraries</div>
<div class="r" style="left:1617px;top:368px;font-size:16px;color:#e0e0e0">Type Layer</div>
<div class="r" style="left:1613.5px;top:425px;font-size:16px;letter-spacing:0.5px">36 pt</div>
<div class="r" style="left:1613.5px;top:463.5px;font-size:16px;letter-spacing:0.4px">Metrics</div>
<div class="r" style="left:1613.5px;top:499px;font-size:16px">100%</div>
<div class="r" style="left:1613.5px;top:534.5px;font-size:16px;letter-spacing:0.5px">0 pt</div>
<div class="r" style="left:1792.5px;top:425px;font-size:16px;letter-spacing:0.3px">(Auto)</div>
<div class="r" style="left:1792.5px;top:463.5px;font-size:16px">200</div>
<div class="r" style="left:1793.5px;top:499px;font-size:16px">105%</div>
<div class="r" style="left:1741.5px;top:534.5px;font-size:16px;color:#d8d8d8">Color</div>
<div class="r" style="left:1582px;top:586px;font-size:16px;letter-spacing:0.3px">English: USA</div>
<div class="r" style="left:1799.5px;top:586px;font-size:16px;letter-spacing:0.3px">Sharp</div>
<div class="r" style="left:1572px;top:717.5px;font-size:16px;font-weight:bold;color:#f0f0f0">Layers</div>
<div class="r" style="left:1651.5px;top:717.5px;font-size:16px;font-weight:bold;color:#c4c4c4">Channels</div>
<div class="r" style="left:1754px;top:717.5px;font-size:16px;font-weight:bold;color:#c4c4c4">Paths</div>
<div class="r" style="left:1596px;top:768px;font-size:16px;letter-spacing:0.3px">Kind</div>
<div class="r" style="left:1574px;top:811px;font-size:16px;letter-spacing:0.3px">Normal</div>
<div class="r" style="left:1769.5px;top:811px;font-size:16px;color:#d8d8d8;letter-spacing:0.2px">Opacity:</div>
<div class="r" style="left:1840px;top:811px;font-size:16px">100%</div>
<div class="r" style="left:1565.5px;top:854px;font-size:16px;color:#d8d8d8;letter-spacing:0.2px">Lock:</div>
<div class="r" style="left:1806px;top:854px;font-size:16px;color:#d8d8d8">Fill:</div>
<div class="r" style="left:1840px;top:854px;font-size:16px">100%</div>
<div class="r" style="left:1672px;top:910px;font-size:16.5px;color:#f0f0f0;letter-spacing:0.15px">Tracking is spacing</div>
<div class="r" style="left:1672px;top:973.5px;font-size:16.5px;color:#e6e6e6;letter-spacing:0.15px">Tracking is spacing</div>
<div class="r" style="left:1672px;top:1036.5px;font-size:16.5px;color:#e6e6e6;letter-spacing:0.15px">Tracking is spacing</div>
<!-- status texts -->
<div class="r" style="left:79px;top:1080.5px;font-size:16.5px;color:#e6e6e6;letter-spacing:0.3px">33.33%</div>
<div class="r" style="left:178px;top:1080.5px;font-size:17px;color:#e0e0e0;letter-spacing:0.15px">2550 px x 3300 px (300 ppi)</div>
<svg style="left:0;top:0" width="450" height="1102"><path d="M422.5 1083.5 L428.5 1090.3 L422.5 1097" stroke="#e0e0e0" stroke-width="1.6" fill="none"/></svg>

</body></html>
